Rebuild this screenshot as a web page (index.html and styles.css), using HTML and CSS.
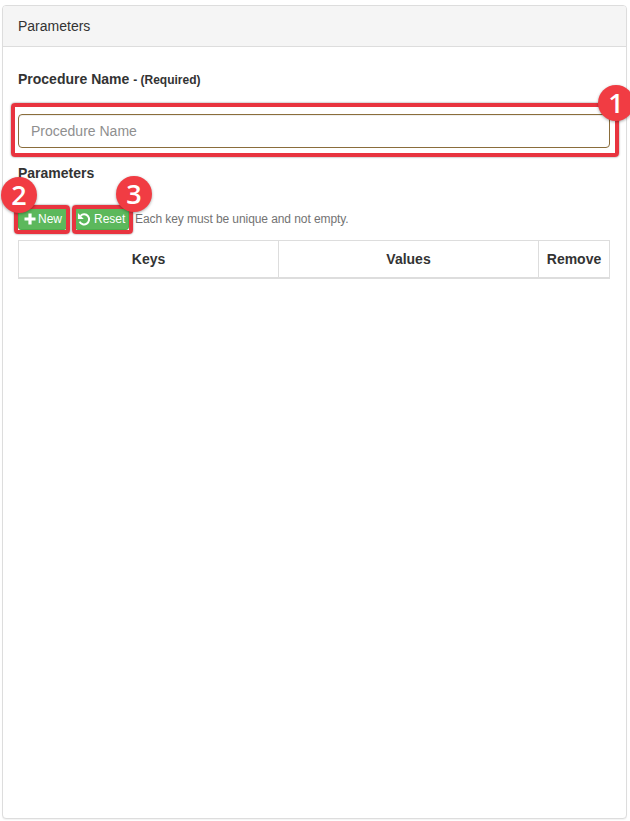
FILE: index.html
```html
<!DOCTYPE html>
<html lang="en">
<head>
<meta charset="utf-8">
<title>Parameters</title>
<link rel="stylesheet" href="styles.css">
</head>
<body>
<div class="panel">
  <div class="panel-heading">Parameters</div>
  <div class="panel-body">
    <div class="field-label"><strong>Procedure Name</strong> <span class="req">- (Required)</span></div>
    <input class="text-input" type="text" placeholder="Procedure Name">
    <div class="params-label">Parameters</div>
    <div class="toolbar">
      <button class="btn btn-new" type="button">
        <svg class="icon" viewBox="0 0 12 12"><path d="M4.4 0.5h3.2v3.9h3.9v3.2H7.6v3.9H4.4V7.6H0.5V4.4h3.9z" fill="#fff"/></svg>New
      </button>
      <button class="btn btn-reset" type="button">
        <svg class="icon icon-reset" viewBox="0 0 12 12"><path d="M3 3.3A4.3 4.3 0 1 1 2.2 8.2" fill="none" stroke="#fff" stroke-width="1.7"/><path d="M0.8 0.9l0 5h5z" fill="#fff"/></svg>Reset
      </button>
      <span class="hint">Each key must be unique and not empty.</span>
    </div>
    <div class="table">
      <div class="th th-key">Keys</div>
      <div class="th th-val">Values</div>
      <div class="th th-rem">Remove</div>
    </div>
  </div>
</div>
<div class="mark mark-input"></div>
<div class="mark mark-new"></div>
<div class="mark mark-reset"></div>
<div class="badge badge-1">1</div>
<div class="badge badge-2">2</div>
<div class="badge badge-3">3</div>
</body>
</html>
```
FILE: styles.css
```css
* { box-sizing: border-box; }
html, body { height: 100%; }
body {
  margin: 0;
  padding: 5px 3px 2px 2px;
  background: #fff;
  font-family: "Liberation Sans", Arial, sans-serif;
  font-size: 14px;
  color: #333;
  overflow: hidden;
}
.panel {
  height: 814px;
  border: 1px solid #ddd;
  border-radius: 4px;
  background: #fff;
  box-shadow: 0 1px 1px rgba(0, 0, 0, .05);
}
.panel-heading {
  height: 41px;
  padding: 10px 15px;
  line-height: 20px;
  background: #f5f5f5;
  border-bottom: 1px solid #ddd;
  border-radius: 3px 3px 0 0;
}
.panel-body { padding: 22px 16px 15px 15px; }
.field-label {
  height: 20px;
  line-height: 20px;
  color: #333;
}
.req { font-size: 12px; font-weight: bold; }
.text-input {
  display: block;
  width: 100%;
  height: 34px;
  margin-top: 25px;
  padding: 6px 12px;
  border: 1px solid #8a6d3b;
  border-radius: 4px;
  font: 14px/20px "Liberation Sans", Arial, sans-serif;
  color: #555;
  background: #fff;
  box-shadow: inset 0 1px 1px rgba(0, 0, 0, .075);
}
.text-input::placeholder { color: #8f8f8f; opacity: 1; }
.params-label {
  margin-top: 15px;
  height: 20px;
  line-height: 20px;
  font-weight: bold;
}
.toolbar {
  display: flex;
  align-items: center;
  height: 22px;
  margin-top: 25px;
}
.btn {
  display: inline-flex;
  align-items: center;
  height: 22px;
  padding: 0 5px;
  border: 1px solid #4cae4c;
  border-radius: 3px;
  background: #5cb85c;
  color: #fff;
  font: 12px/18px "Liberation Sans", Arial, sans-serif;
}
.icon { width: 12px; height: 12px; margin-right: 2px; flex: none; }
.icon-reset { width: 14px; height: 14px; margin-right: 3px; }
.btn-new { width: 49px; }
.btn-reset { width: 54px; margin-left: 8px; padding: 0 1px; }
.hint { margin-left: 6px; font-size: 12px; letter-spacing: -.08px; color: #737373; }
.table {
  display: grid;
  grid-template-columns: 260px 260px 72px;
  height: 39px;
  margin-top: 10px;
  border-top: 1px solid #ddd;
  border-bottom: 2px solid #ddd;
}
.th {
  display: flex;
  align-items: center;
  justify-content: center;
  font-weight: bold;
  border-left: 1px solid #ddd;
}
.th-rem { border-right: 1px solid #ddd; }
.mark {
  position: absolute;
  border: 4px solid #e8343f;
  border-radius: 4px;
  box-shadow: 0 0 2px rgba(0, 0, 0, .55);
}
.mark-input { left: 11px; top: 103px; width: 608px; height: 54px; }
.mark-new { left: 14px; top: 205px; width: 56px; height: 29px; }
.mark-reset { left: 72px; top: 205px; width: 61px; height: 29px; }
.badge {
  position: absolute;
  width: 36px;
  height: 36px;
  border-radius: 50%;
  background: #f13c43;
  color: #fff;
  font: 600 27px/36px "Open Sans", "Liberation Sans", sans-serif;
  text-align: center;
  box-shadow: 0 1px 3px rgba(0, 0, 0, .35);
}
.badge-1 { left: 598px; top: 85px; }
.badge-2 { left: 1px; top: 177px; }
.badge-3 { left: 116px; top: 176px; }
```
